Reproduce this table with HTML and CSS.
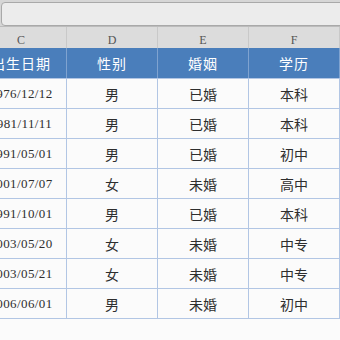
FILE: index.html
```html
<!DOCTYPE html>
<html lang="zh">
<head>
<meta charset="utf-8">
<link rel="stylesheet" href="styles.css">
</head>
<body>
<div class="formula-bar"><div class="formula-input"></div></div>
<div class="sheet">
  <div class="row col-heads">
    <div class="cell">C</div><div class="cell">D</div><div class="cell">E</div><div class="cell">F</div>
  </div>
  <div class="row head">
    <div class="cell">出生日期</div><div class="cell">性别</div><div class="cell">婚姻</div><div class="cell">学历</div>
  </div>
  <div class="row"><div class="cell date">1976/12/12</div><div class="cell">男</div><div class="cell">已婚</div><div class="cell">本科</div></div>
  <div class="row"><div class="cell date">1981/11/11</div><div class="cell">男</div><div class="cell">已婚</div><div class="cell">本科</div></div>
  <div class="row"><div class="cell date">1991/05/01</div><div class="cell">男</div><div class="cell">已婚</div><div class="cell">初中</div></div>
  <div class="row"><div class="cell date">2001/07/07</div><div class="cell">女</div><div class="cell">未婚</div><div class="cell">高中</div></div>
  <div class="row"><div class="cell date">1991/10/01</div><div class="cell">男</div><div class="cell">已婚</div><div class="cell">本科</div></div>
  <div class="row"><div class="cell date">2003/05/20</div><div class="cell">女</div><div class="cell">未婚</div><div class="cell">中专</div></div>
  <div class="row"><div class="cell date">2003/05/21</div><div class="cell">女</div><div class="cell">未婚</div><div class="cell">中专</div></div>
  <div class="row"><div class="cell date">2006/06/01</div><div class="cell">男</div><div class="cell">未婚</div><div class="cell">初中</div></div>
</div>
</body>
</html>
```
FILE: styles.css
```css
html, body {
  margin: 0;
  padding: 0;
}
body {
  width: 340px;
  height: 340px;
  overflow: hidden;
  background: #fbfbfb;
  font-family: "Noto Sans CJK SC", sans-serif;
}
.formula-bar {
  height: 27px;
  background: #d6d6d6;
  border-bottom: 1px solid #bcbcbc;
  padding: 2px 0 0 1px;
  box-sizing: border-box;
}
.formula-input {
  width: 360px;
  height: 24px;
  box-sizing: border-box;
  background: #ececec;
  border: 1px solid #a9a9a9;
  border-radius: 4px;
}
.sheet {
  margin-left: -24px;
  width: 364px;
}
.row {
  display: grid;
  grid-template-columns: 91px 91px 91px 91px;
  height: 30px;
  box-sizing: border-box;
  border-bottom: 1px solid #b2c6e4;
}
.cell {
  display: flex;
  align-items: center;
  justify-content: center;
  border-right: 1px solid #b2c6e4;
  font-size: 14px;
  color: #2e2e2e;
  white-space: nowrap;
  overflow: hidden;
}
.col-heads {
  height: 21px;
  background: #dcdcdc;
  border-bottom: none;
}
.col-heads .cell {
  border-right: 1px solid #c9c9c9;
  font-family: "Liberation Serif", serif;
  font-size: 12px;
  color: #555;
  padding-top: 6px;
  box-sizing: border-box;
}
.head {
  height: 31px;
  background: #4a7ebb;
}
.head .cell {
  color: #ffffff;
  font-size: 14px;
  letter-spacing: 1px;
  border-right: 1px solid #7fa3d0;
}
.date {
  font-family: "Liberation Serif", serif;
  font-size: 13px;
  letter-spacing: 0.4px;
}
```
